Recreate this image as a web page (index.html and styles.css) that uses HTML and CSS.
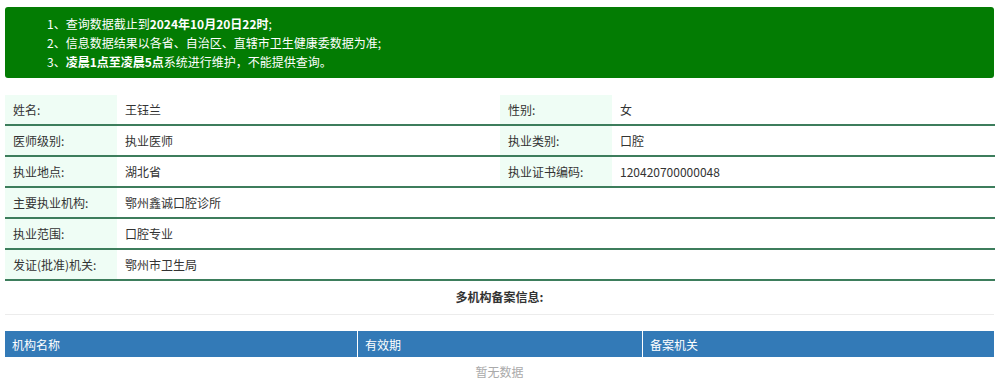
FILE: index.html
```html
<!DOCTYPE html>
<html lang="zh-CN">

<head>
    <meta charset="UTF-8">
    <title>医师执业信息查询</title>
    <link rel="stylesheet" href="styles.css">
</head>

<body>
    <div class="page">
        <div class="notice">
            <p>1、查询数据截止到<b>2024年10月20日22时</b>;</p>
            <p>2、信息数据结果以各省、自治区、直辖市卫生健康委数据为准;</p>
            <p>3、<b>凌晨1点至凌晨5点</b>系统进行维护，不能提供查询。</p>
        </div>

        <table class="info">
            <tr>
                <td class="label">姓名:</td>
                <td class="value">王钰兰</td>
                <td class="label">性别:</td>
                <td class="value">女</td>
            </tr>
            <tr>
                <td class="label">医师级别:</td>
                <td class="value">执业医师</td>
                <td class="label">执业类别:</td>
                <td class="value">口腔</td>
            </tr>
            <tr>
                <td class="label">执业地点:</td>
                <td class="value">湖北省</td>
                <td class="label">执业证书编码:</td>
                <td class="value">120420700000048</td>
            </tr>
            <tr>
                <td class="label">主要执业机构:</td>
                <td class="value" colspan="3">鄂州鑫诚口腔诊所</td>
            </tr>
            <tr>
                <td class="label">执业范围:</td>
                <td class="value" colspan="3">口腔专业</td>
            </tr>
            <tr>
                <td class="label">发证(批准)机关:</td>
                <td class="value" colspan="3">鄂州市卫生局</td>
            </tr>
        </table>

        <div class="section-title">多机构备案信息:</div>

        <table class="records">
            <thead>
                <tr>
                    <th class="col-name">机构名称</th>
                    <th class="col-date">有效期</th>
                    <th>备案机关</th>
                </tr>
            </thead>
            <tbody>
                <tr>
                    <td class="empty" colspan="3">暂无数据</td>
                </tr>
            </tbody>
        </table>
    </div>
</body>

</html>
```

FILE: styles.css
```css
body {
    margin: 0;
    background-color: #ffffff;
    color: #333333;
    font-family: "Microsoft YaHei", "Noto Sans CJK SC", "Noto Sans", sans-serif;
    font-size: 12px;
}

.page {
    padding: 7px 6px 0 5px;
}

/* green notice box */
.notice {
    background-color: #037c03;
    color: #ffffff;
    border-radius: 3px;
    padding: 7px 0 7px 42px;
    height: 57px;
}

.notice p {
    margin: 0;
    line-height: 19px;
}

.notice b {
    font-weight: bold;
}

/* doctor details */
.info {
    width: 100%;
    border-collapse: collapse;
    margin-top: 17px;
    table-layout: fixed;
}

.info td {
    height: 29px;
    padding: 0 0 0 8px;
    border-bottom: 2px solid #3d7d5c;
    vertical-align: middle;
}

.info .label {
    width: 104px;
    background-color: #effdf5;
}

.info .value {
    width: 375px;
}

.section-title {
    text-align: center;
    font-weight: bold;
    font-size: 12px;
    line-height: 32px;
    height: 33px;
    border-bottom: 1px solid #ececec;
}

/* records table */
.records {
    width: 100%;
    border-collapse: collapse;
    margin-top: 16px;
    table-layout: fixed;
}

.records th {
    background-color: #337ab7;
    color: #ffffff;
    font-weight: normal;
    text-align: left;
    height: 26px;
    padding: 0 0 0 7px;
    border-left: 1px solid #ffffff;
}

.records th:first-child {
    border-left: none;
}

.records .col-name {
    width: 345px;
}

.records .col-date {
    width: 277px;
}

.records .empty {
    text-align: center;
    color: #aaaaaa;
    height: 30px;
    padding: 6px 0 0;
    vertical-align: top;
}
```
